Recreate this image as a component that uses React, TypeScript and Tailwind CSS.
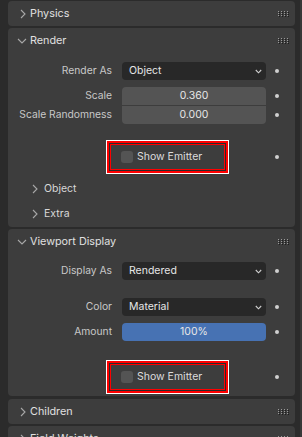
import React from "react";

const font = { fontFamily: "Inter, 'DejaVu Sans', sans-serif" };

function ChevRight({ className = "" }: { className?: string }) {
  return (
    <svg width="6" height="10" viewBox="0 0 6 10" className={className}>
      <path d="M1 1 L5 5 L1 9" fill="none" stroke="#a8a8a8" strokeWidth="1.1" />
    </svg>
  );
}
function ChevDown({ className = "" }: { className?: string }) {
  return (
    <svg width="10" height="6" viewBox="0 0 10 6" className={className}>
      <path d="M1 1 L5 5 L9 1" fill="none" stroke="#a8a8a8" strokeWidth="1.1" />
    </svg>
  );
}
function SmallDown() {
  return (
    <svg width="7" height="5" viewBox="0 0 7 5">
      <path d="M0.8 1 L3.5 3.8 L6.2 1" fill="none" stroke="#d0d0d0" strokeWidth="1.1" />
    </svg>
  );
}
function Grip() {
  const dots = [];
  for (let c = 0; c < 4; c++)
    for (let r = 0; r < 3; r++)
      dots.push(<rect key={`${c}-${r}`} x={c * 3} y={r * 2} width="1" height="1" fill="#9a9a9a" />);
  const sh = [];
  for (let c = 0; c < 4; c++)
    for (let r = 0; r < 3; r++)
      sh.push(<rect key={`s${c}-${r}`} x={c * 3 + 1} y={r * 2 + 1} width="1" height="1" fill="#1e1e1e" />);
  return (
    <svg width="11" height="6" viewBox="0 0 11 6">
      {sh}
      {dots}
    </svg>
  );
}

function Dot() {
  return <div className="w-[4px] h-[4px] rounded-full bg-[#d0d0d0] ml-[9px]" />;
}

function Header({ title, open }: { title: string; open: boolean }) {
  return (
    <div className="h-[25px] flex items-center relative">
      <div className="w-[22px] flex justify-end pr-[3px] pt-[1px]">
        {open ? <ChevDown /> : <ChevRight className="mr-[1px]" />}
      </div>
      <span className="text-[10.8px] text-[#e0e0e0] flex-1 pt-[2px]">{title}</span>
      <div className="mr-[6px] flex items-center">
        <Grip />
      </div>
    </div>
  );
}

function Label({ text }: { text: string }) {
  return <div className="w-[104px] text-right text-[10.3px] text-[#c8c8c8] pr-0 whitespace-nowrap">{text}</div>;
}

function DropRow({ label, value }: { label: string; value: string }) {
  return (
    <div className="h-[18px] flex items-center">
      <Label text={label} />
      <div className="ml-[10px] w-[144px] h-[18px] rounded-[4px] bg-[#282828] flex items-center pl-[7px] pr-[4px]">
        <span className="flex-1 text-[10.5px] text-[#e6e6e6]">{value}</span>
        <SmallDown />
      </div>
      <Dot />
    </div>
  );
}

function NumRow({ label, value, rounded, bg = "bg-[#545454]" }: { label: string; value: string; rounded: string; bg?: string }) {
  return (
    <div className="h-[18px] flex items-center">
      <Label text={label} />
      <div className={`ml-[10px] w-[144px] h-[18px] ${rounded} ${bg} flex items-center justify-center`}>
        <span className="text-[10.5px] text-[#e6e6e6]">{value}</span>
      </div>
      <Dot />
    </div>
  );
}

function EmitterBox() {
  return (
    <div className="h-[34px] flex items-center">
      <div className="w-[98px]" />
      <div className="w-[123px] h-[34px] border border-white">
        <div className="w-full h-full border-2 border-[#ff0000]">
          <div className="w-full h-full border border-[#2a2a2a]">
            <div className="w-full h-full border border-[#ff0000] bg-[#3d3d3d] flex items-center pl-[10px]">
              <div className="w-[12px] h-[12px] rounded-[3px] bg-[#545454]" />
              <span className="ml-[4px] text-[10.5px] text-[#dcdcdc]">Show Emitter</span>
            </div>
          </div>
        </div>
      </div>
      <div className="w-[37px]" />
      <div className="w-[4px] h-[4px] rounded-full bg-[#d0d0d0] ml-[9px]" />
    </div>
  );
}

function SubHeader({ title }: { title: string }) {
  return (
    <div className="h-[25px] flex items-center">
      <div className="w-[30px] flex justify-end">
        <ChevRight />
      </div>
      <span className="ml-[6px] text-[10.5px] text-[#d8d8d8]">{title}</span>
    </div>
  );
}

export default function App() {
  return (
    <div className="w-[302px] h-[437px] bg-[#2b2b2b] overflow-hidden flex" style={font}>
      <div className="flex-1 flex flex-col pl-[8px] pr-[5px]">
        <div className="h-[2px] rounded-b-[4px] bg-[#3d3d3d]" />
        <div className="mt-[1px] rounded-[4px] bg-[#3d3d3d]">
          <Header title="Physics" open={false} />
        </div>
        <div className="mt-[2px] rounded-[4px] bg-[#3d3d3d] pb-[1px]">
          <Header title="Render" open={true} />
          <div className="mt-[9px]">
            <DropRow label="Render As" value="Object" />
          </div>
          <div className="mt-[7px]">
            <NumRow label="Scale" value="0.360" rounded="rounded-t-[4px]" />
          </div>
          <div className="mt-[1px]">
            <NumRow label="Scale Randomness" value="0.000" rounded="rounded-b-[4px]" />
          </div>
          <div className="mt-[16px]">
            <EmitterBox />
          </div>
          <div className="mt-[2px]">
            <SubHeader title="Object" />
            <SubHeader title="Extra" />
          </div>
        </div>
        <div className="mt-[2px] rounded-[4px] bg-[#3d3d3d] pb-[2px]">
          <Header title="Viewport Display" open={true} />
          <div className="mt-[8px]">
            <DropRow label="Display As" value="Rendered" />
          </div>
          <div className="mt-[18px]">
            <DropRow label="Color" value="Material" />
          </div>
          <div className="mt-[7px]">
            <NumRow label="Amount" value="100%" rounded="rounded-[4px]" bg="bg-[#4772b3]" />
          </div>
          <div className="mt-[19px]">
            <EmitterBox />
          </div>
        </div>
        <div className="mt-[3px] rounded-[4px] bg-[#3d3d3d]">
          <Header title="Children" open={false} />
        </div>
        <div className="mt-[2px] rounded-[4px] bg-[#3d3d3d]">
          <Header title="Field Weights" open={false} />
        </div>
      </div>
      <div className="w-[2px] bg-[#383838]" />
    </div>
  );
}
